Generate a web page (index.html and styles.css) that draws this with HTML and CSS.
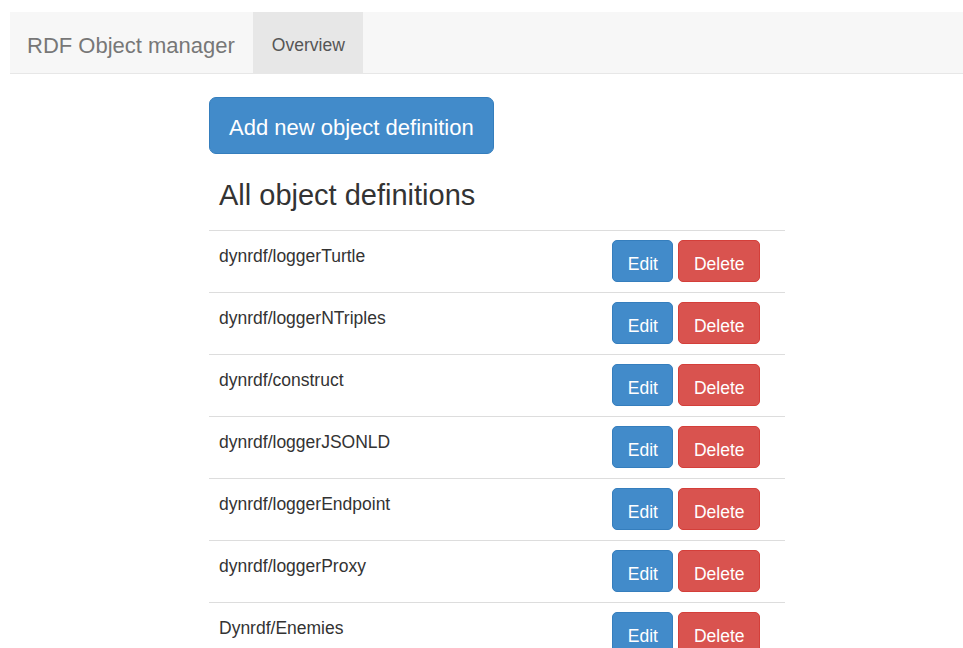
FILE: index.html
```html
<!DOCTYPE html>
<html lang="en">
<head>
<meta charset="utf-8">
<title>RDF Object manager</title>
<link rel="stylesheet" href="styles.css">
</head>
<body>
  <nav class="navbar">
    <a class="navbar-brand" href="#">RDF Object manager</a>
    <ul class="nav">
      <li class="nav-item active"><a href="#">Overview</a></li>
    </ul>
  </nav>

  <main class="container">
    <button class="btn btn-primary btn-lg" type="button">Add new object definition</button>
    <h3 class="section-title">All object definitions</h3>

    <div class="definitions">
      <div class="def-row">
        <div class="def-name">dynrdf/loggerTurtle</div>
        <div class="def-actions"><button class="btn btn-primary btn-edit">Edit</button><button class="btn btn-danger">Delete</button></div>
      </div>
      <div class="def-row">
        <div class="def-name">dynrdf/loggerNTriples</div>
        <div class="def-actions"><button class="btn btn-primary btn-edit">Edit</button><button class="btn btn-danger">Delete</button></div>
      </div>
      <div class="def-row">
        <div class="def-name">dynrdf/construct</div>
        <div class="def-actions"><button class="btn btn-primary btn-edit">Edit</button><button class="btn btn-danger">Delete</button></div>
      </div>
      <div class="def-row">
        <div class="def-name">dynrdf/loggerJSONLD</div>
        <div class="def-actions"><button class="btn btn-primary btn-edit">Edit</button><button class="btn btn-danger">Delete</button></div>
      </div>
      <div class="def-row">
        <div class="def-name">dynrdf/loggerEndpoint</div>
        <div class="def-actions"><button class="btn btn-primary btn-edit">Edit</button><button class="btn btn-danger">Delete</button></div>
      </div>
      <div class="def-row">
        <div class="def-name">dynrdf/loggerProxy</div>
        <div class="def-actions"><button class="btn btn-primary btn-edit">Edit</button><button class="btn btn-danger">Delete</button></div>
      </div>
      <div class="def-row">
        <div class="def-name">Dynrdf/Enemies</div>
        <div class="def-actions"><button class="btn btn-primary btn-edit">Edit</button><button class="btn btn-danger">Delete</button></div>
      </div>
    </div>
  </main>
</body>
</html>
```

FILE: styles.css
```css
* {
  box-sizing: border-box;
}

html,
body {
  margin: 0;
  padding: 0;
  background: #fff;
}

body {
  font-family: "Liberation Sans", Arial, Helvetica, sans-serif;
  font-size: 17.5px;
  line-height: 25px;
  color: #333;
}

/* top navigation bar */
.navbar {
  display: flex;
  align-items: stretch;
  height: 62px;
  margin: 12px 0 0 10px;
  background: #f7f7f7;
  border-bottom: 1px solid #e7e7e7;
}

.navbar-brand {
  display: flex;
  align-items: center;
  padding: 6px 18px 0 17px;
  font-size: 22px;
  color: #777;
  text-decoration: none;
}

.nav {
  display: flex;
  margin: 0;
  padding: 0;
  list-style: none;
}

.nav-item a {
  display: flex;
  align-items: center;
  height: 100%;
  padding: 6px 18px 0 19px;
  font-size: 17.5px;
  color: #555;
  text-decoration: none;
}

.nav-item.active a {
  background: #e7e7e7;
}

/* page content */
.container {
  width: 576px;
  margin: 23px 0 0 209px;
}

.btn {
  display: inline-block;
  height: 42px;
  padding: 6px 14.5px 0;
  font-family: inherit;
  font-size: 17.5px;
  line-height: 34px;
  color: #fff;
  border: 1px solid transparent;
  border-radius: 5px;
  cursor: pointer;
}

.btn-primary {
  background: #428bca;
  border-color: #357ebd;
}

.btn-danger {
  background: #d9534f;
  border-color: #d43f3a;
}

.btn-lg {
  height: 57px;
  padding: 4px 19px 0;
  font-size: 22px;
  line-height: 51px;
  border-radius: 7px;
}

.section-title {
  margin: 25px 0 18px;
  padding-left: 10px;
  font-size: 29px;
  line-height: 33px;
  font-weight: 500;
  color: #333;
}

/* definition list */
.definitions {
  display: flex;
  flex-direction: column;
}

.def-row {
  display: flex;
  justify-content: space-between;
  height: 62px;
  border-top: 1px solid #ddd;
}

.def-name {
  padding: 13px 10px 0;
}

.def-actions {
  display: flex;
  gap: 5px;
  padding: 9px 25px 0 0;
}
```
